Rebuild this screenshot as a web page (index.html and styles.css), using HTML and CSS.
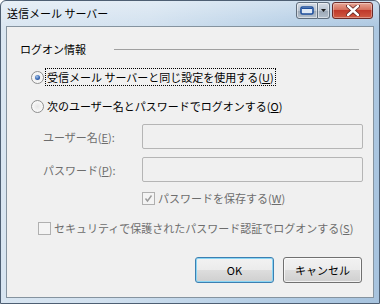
FILE: index.html
```html
<!DOCTYPE html>
<html>
<head>
	<meta charset="utf-8">
	<title>送信メール サーバー</title>
	<link rel="stylesheet" href="styles.css">
</head>
<body>
	<div class="window">
		<div class="title-bar">
			<div class="title">送信メール サーバー</div>
			<div class="title-buttons">
				<div class="tb-tool">
					<svg width="14" height="9" viewBox="0 0 14 9"><rect x="1" y="1" width="12" height="7" rx="1.5" fill="#dfe9f5" stroke="#1f4f9c" stroke-width="1.6"/><line x1="2" y1="2.5" x2="12" y2="2.5" stroke="#1f4f9c" stroke-width="1"/></svg>
				</div>
				<div class="tb-drop">
					<svg width="5" height="3" viewBox="0 0 5 3"><path d="M0 0 H5 L2.5 3 Z" fill="#1a1a1a"/></svg>
				</div>
				<div class="tb-close">
					<svg width="14" height="11" viewBox="0 0 14 11"><path d="M2 1 L12 10 M12 1 L2 10" stroke="#5a2020" stroke-width="4" stroke-linecap="round"/><path d="M2 1 L12 10 M12 1 L2 10" stroke="#fff" stroke-width="2.4" stroke-linecap="round"/></svg>
				</div>
			</div>
		</div>

		<div class="client">
			<div class="group-head">
				<span>ログオン情報</span>
				<div class="group-line"></div>
			</div>

			<div class="option first">
				<span class="radio checked"></span>
				<span class="focus-box">受信メール サーバーと同じ設定を使用する(<u>U</u>)</span>
			</div>
			<div class="option second">
				<span class="radio"></span>
				<span class="option-text">次のユーザー名とパスワードでログオンする(<u>O</u>)</span>
			</div>

			<div class="field first-field">
				<label>ユーザー名(<u>E</u>):</label>
				<div class="text-box"></div>
			</div>
			<div class="field">
				<label>パスワード(<u>P</u>):</label>
				<div class="text-box"></div>
			</div>

			<div class="check save">
				<span class="check-box">
					<svg width="9" height="9" viewBox="0 0 9 9"><path d="M1.5 4.5 L3.5 7 L7.5 1.5" fill="none" stroke="#9a9a9a" stroke-width="1.4"/></svg>
				</span>
				<span class="disabled-text">パスワードを保存する(<u>W</u>)</span>
			</div>
			<div class="check secure">
				<span class="check-box"></span>
				<span class="disabled-text">セキュリティで保護されたパスワード認証でログオンする(<u>S</u>)</span>
			</div>

			<div class="buttons">
				<button class="default">OK</button>
				<button>キャンセル</button>
			</div>
		</div>
	</div>
</body>
</html>
```

FILE: styles.css
```css
body {
	margin: 0;
	padding: 0;
	font-family: 'Noto Sans CJK JP', 'Noto Sans', sans-serif;
	font-size: 11px;
	color: #000;
	background-color: #fff;
}

.window {
	width: 380px;
	height: 304px;
	box-sizing: border-box;
	display: flex;
	flex-direction: column;
	border: 1px solid #4e5f73;
	border-radius: 6px 6px 0 0;
	background:
		linear-gradient(to bottom, rgba(255, 255, 255, 0.35), rgba(255, 255, 255, 0) 26px),
		linear-gradient(100deg, #dbe7f2 0%, #d2e1ef 35%, #b6cfe6 70%, #a7c3de 100%);
}

.title-bar {
	height: 25px;
	display: flex;
	align-items: flex-start;
	padding: 0 6px 0 6px;
}

.title {
	line-height: 25px;
	flex: 1;
}

.title-buttons {
	display: flex;
	margin-top: 1px;
}

.tb-tool,
.tb-drop {
	height: 15px;
	display: flex;
	align-items: center;
	justify-content: center;
	border: 1px solid #5f6d7c;
	background: linear-gradient(to bottom, #d6dde6 0%, #b8c3cf 50%, #9aa7b5 51%, #b3bfcc 100%);
	box-shadow: inset 0 0 0 1px rgba(255, 255, 255, 0.5);
}

.tb-tool {
	width: 20px;
	border-radius: 3px 0 0 3px;
}

.tb-drop {
	width: 11px;
	border-left: none;
	border-radius: 0 3px 3px 0;
}

.tb-close {
	width: 39px;
	height: 15px;
	margin-left: 2px;
	display: flex;
	align-items: center;
	justify-content: center;
	border: 1px solid #6b2a28;
	border-radius: 3px;
	background: linear-gradient(to bottom, #e7a696 0%, #d5705d 45%, #c0392b 50%, #cf5a43 100%);
	box-shadow: inset 0 0 0 1px rgba(255, 255, 255, 0.35);
}

.client {
	flex: 1;
	margin: 0 5px 5px 5px;
	border: 1px solid #85939f;
	background-color: #f0f0f0;
	padding: 14px 10px 0 13px;
	display: flex;
	flex-direction: column;
}

.group-head {
	height: 16px;
	display: flex;
	align-items: center;
}

.group-line {
	flex: 1;
	height: 1px;
	background-color: #a0a0a0;
	margin: 0 4px 0 28px;
}

.option {
	height: 18px;
	display: flex;
	align-items: center;
	margin-left: 11px;
}

.option.first {
	margin-top: 11px;
}

.option.second {
	margin-top: 11px;
}

.radio {
	width: 13px;
	height: 13px;
	box-sizing: border-box;
	border: 1px solid #8e8f8f;
	border-radius: 50%;
	background: radial-gradient(circle at 50% 50%, #e6e6e6 0%, #f6f6f6 60%, #fdfdfd 100%);
	display: flex;
	align-items: center;
	justify-content: center;
	margin-right: 1px;
}

.radio.checked::after {
	content: '';
	width: 5px;
	height: 5px;
	border-radius: 50%;
	background: radial-gradient(circle at 40% 35%, #a7c6ec 0%, #3667b3 55%, #1d3f86 100%);
}

.focus-box {
	border: 1px dotted #000;
	padding: 0 1px;
	line-height: 16px;
	white-space: nowrap;
}

.option-text {
	padding: 0 2px;
	white-space: nowrap;
}

.field {
	height: 25px;
	display: flex;
	align-items: center;
	margin-left: 23px;
	margin-top: 8px;
}

.field.first-field {
	margin-top: 9px;
}

.field label {
	width: 99px;
	color: #6d6d6d;
}

.text-box {
	flex: 1;
	height: 25px;
	box-sizing: border-box;
	border: 1px solid #b5b5b5;
	border-radius: 2px;
	background-color: #f0f0f0;
}

.check {
	height: 16px;
	display: flex;
	align-items: center;
	white-space: nowrap;
}

.check.save {
	margin-top: 8px;
	margin-left: 122px;
}

.check.secure {
	margin-top: 14px;
	margin-left: 18px;
}

.check-box {
	width: 11px;
	height: 11px;
	border: 1px solid #b0b0b0;
	background-color: #f4f4f4;
	display: flex;
	align-items: center;
	justify-content: center;
	margin-right: 3px;
}

.disabled-text {
	color: #6d6d6d;
}

.buttons {
	display: flex;
	justify-content: flex-end;
	gap: 9px;
	margin-top: 21px;
	padding-right: 1px;
}

.buttons button {
	width: 79px;
	height: 26px;
	font-family: 'Noto Sans CJK JP', 'Noto Sans', sans-serif;
	font-size: 11px;
	color: #000;
	border: 1px solid #707070;
	border-radius: 3px;
	background: linear-gradient(to bottom, #f2f2f2 0%, #ebebeb 50%, #dddddd 51%, #cfcfcf 100%);
	box-shadow: inset 0 0 0 1px rgba(255, 255, 255, 0.7);
	padding: 0;
}

.buttons button.default {
	border-color: #3c7fb1;
	box-shadow: inset 0 0 0 1px #8ad6f5;
}
```
